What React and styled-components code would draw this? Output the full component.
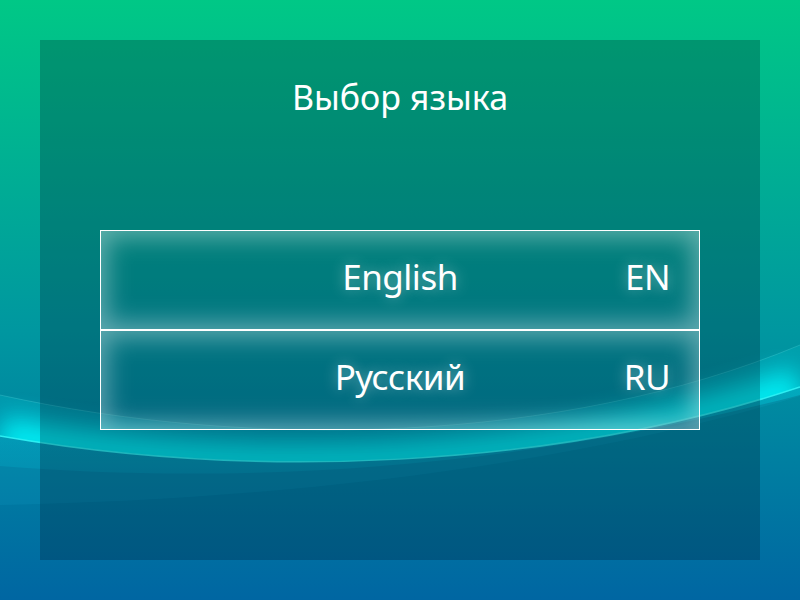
import React from "react"
import styled, { createGlobalStyle } from "styled-components"

const GlobalStyle = createGlobalStyle`
  html, body {
    margin: 0;
    padding: 0;
    width: 800px;
    height: 600px;
    overflow: hidden;
  }
  body {
    font-family: "Noto Sans", "DejaVu Sans", sans-serif;
  }
`

const Screen = styled.div`
  position: relative;
  width: 800px;
  height: 600px;
  padding: 40px;
  box-sizing: border-box;
  background: linear-gradient(180deg, #00c886 0%, #0097a0 55%, #0066a2 100%);
  overflow: hidden;
`

// wallpaper drawing sits underneath the panel
const Wallpaper = styled.svg`
  position: absolute;
  inset: 0;
  width: 800px;
  height: 600px;
`

const Panel = styled.div`
  position: relative;
  height: 520px;
  background: rgba(0, 25, 40, 0.26);
  display: flex;
  flex-direction: column;
  align-items: center;
`

const Title = styled.h1`
  margin: 32px 0 0;
  height: 50px;
  font-size: 34px;
  line-height: 50px;
  font-weight: 400;
  color: #ffffff;
`

const LangList = styled.div`
  margin-top: 108px;
  width: 600px;
  display: flex;
  flex-direction: column;
`

const LangButton = styled.button`
  display: grid;
  grid-template-columns: 1fr auto 1fr;
  align-items: center;
  width: 600px;
  height: 100px;
  padding: 0 29px 8px;
  border: 1px solid #ffffff;
  background: transparent;
  box-shadow: inset 0 0 24px 6px rgba(255, 255, 255, 0.38);
  color: #ffffff;
  font-family: "Noto Sans", "DejaVu Sans", sans-serif;
  font-size: 35px;
  letter-spacing: -0.5px;
  cursor: pointer;
  text-shadow: 0 0 14px rgba(255, 255, 255, 0.45);
`

const LangName = styled.span`
  grid-column: 2;
`

const LangCode = styled.span`
  grid-column: 3;
  justify-self: end;
`

const edge = "M0,436 C250,480 550,470 800,387"
const upper = "M0,395 C250,450 560,445 800,345"
const lowerB = "M800,387 C550,470 250,480 0,436 L0,466 C250,486 520,468 800,395 Z"
const lowerC = "M800,387 C550,470 250,480 0,436 L0,505 C250,500 550,472 800,396 Z"

const WaveArt = () => (
  <Wallpaper viewBox="0 0 800 600">
    <defs>
      <clipPath id="aboveEdge">
        <path d={`${edge} L800,0 L0,0 Z`} />
      </clipPath>
      <filter id="soft" x="-20%" y="-50%" width="140%" height="200%">
        <feGaussianBlur stdDeviation="12" />
      </filter>
      <linearGradient id="bandGrad" x1="0" y1="0" x2="0" y2="1">
        <stop offset="0" stopColor="#00e0ee" stopOpacity="0.32" />
        <stop offset="1" stopColor="#00d0e8" stopOpacity="0.14" />
      </linearGradient>
    </defs>
    <g clipPath="url(#aboveEdge)">
      <path d={`${upper} L800,387 C550,470 250,480 0,436 Z`} fill="#00d8e6" opacity="0.18" />
      <path d={edge} stroke="#00eef4" strokeWidth="40" fill="none" filter="url(#soft)" opacity="0.95" />
      <path d={upper} stroke="#8ff" strokeWidth="1" fill="none" opacity="0.18" />
    </g>
    <path d={lowerC} fill="#20c8ec" opacity="0.1" />
    <path d={lowerB} fill="url(#bandGrad)" />
    <path d={edge} stroke="#30f4f6" strokeWidth="1.5" fill="none" opacity="0.9" />
  </Wallpaper>
)

const languages = [
  { name: "English", code: "EN" },
  { name: "Русский", code: "RU" },
]

const App = () => {
  return (
    <>
      <GlobalStyle />
      <Screen>
        <WaveArt />
        <Panel>
          <Title>Выбор языка</Title>
          <LangList>
            {languages.map(lang => (
              <LangButton key={lang.code}>
                <LangName>{lang.name}</LangName>
                <LangCode>{lang.code}</LangCode>
              </LangButton>
            ))}
          </LangList>
        </Panel>
      </Screen>
    </>
  )
}

export default App
